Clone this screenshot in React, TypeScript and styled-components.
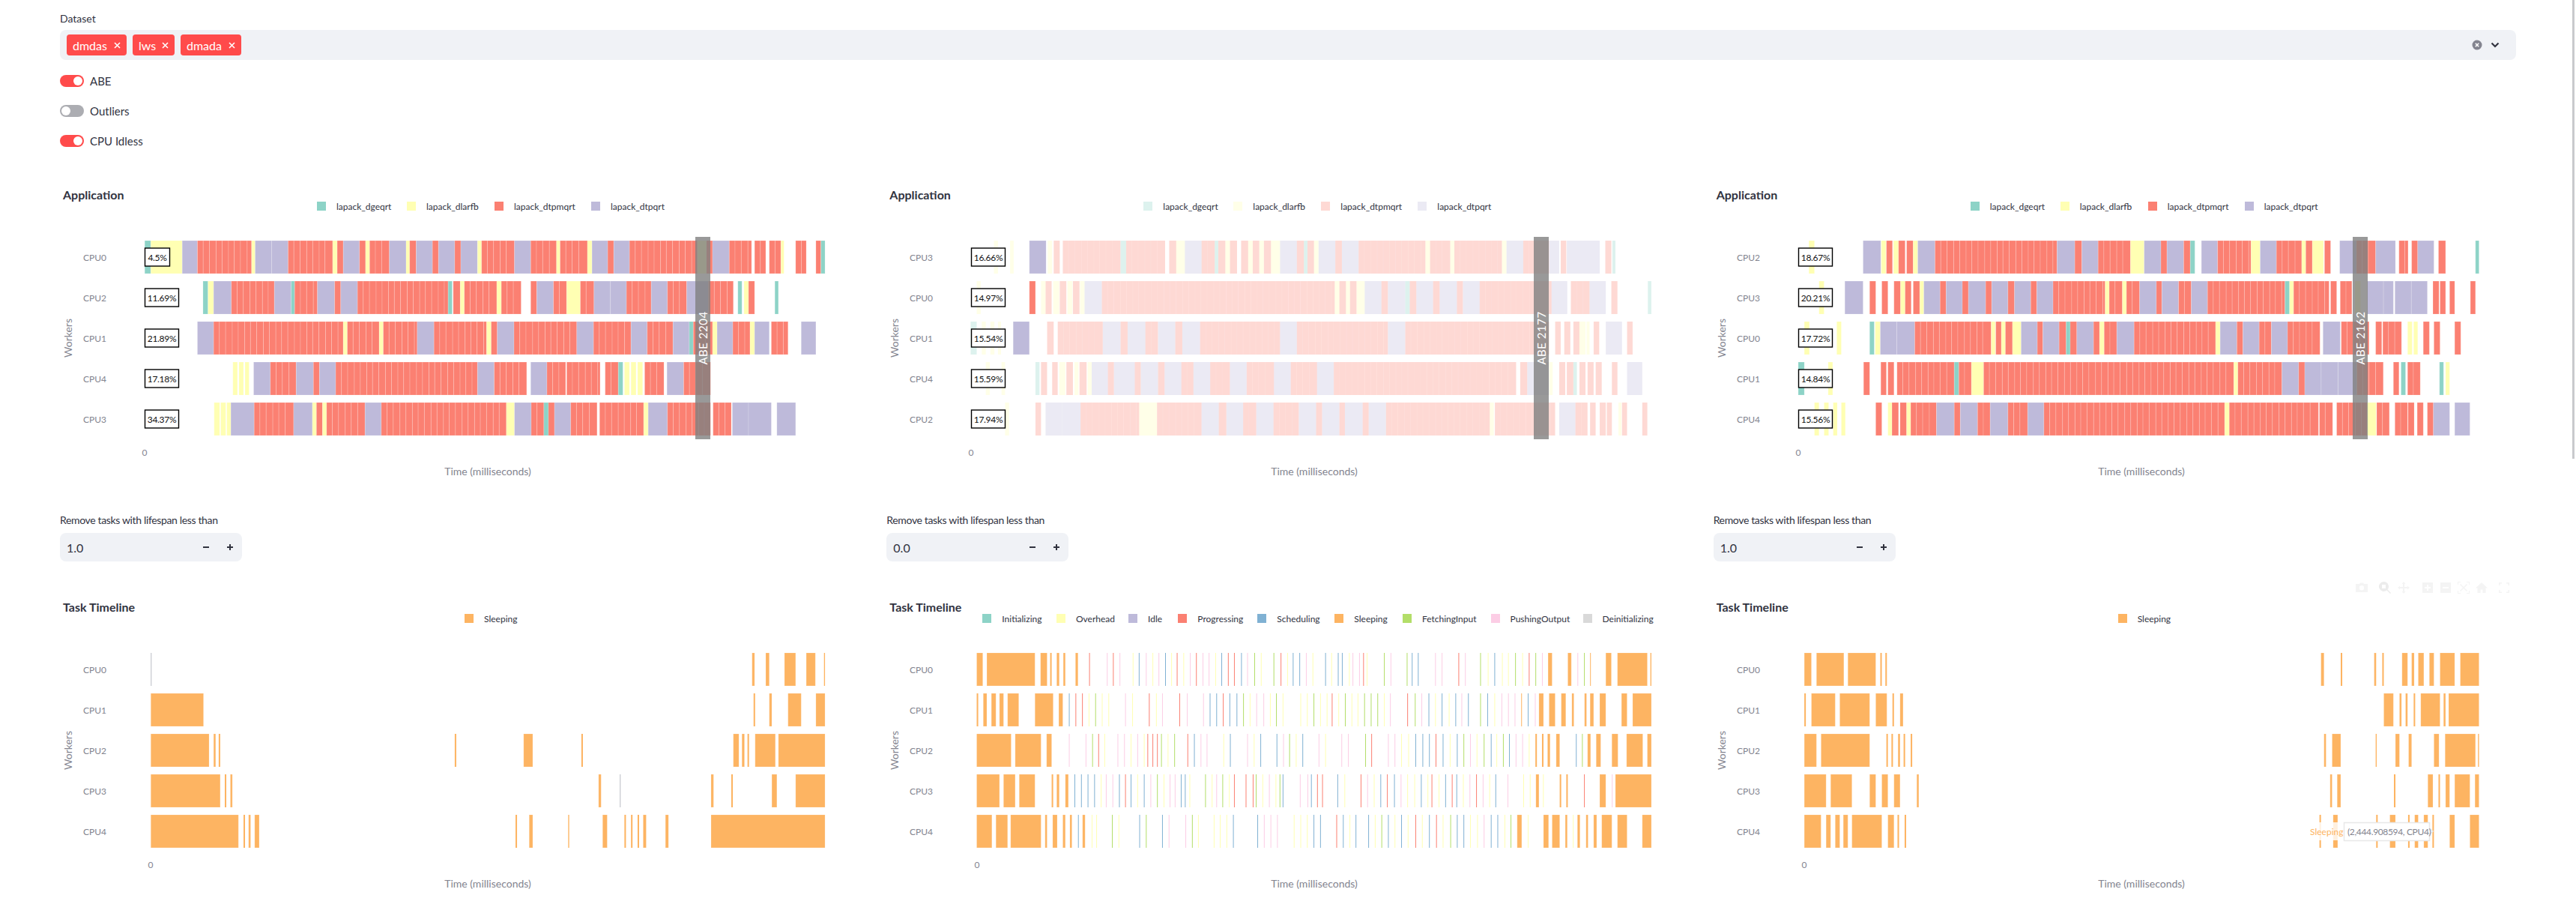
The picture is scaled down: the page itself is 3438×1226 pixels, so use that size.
import { FC } from 'react';
import styled, { createGlobalStyle } from 'styled-components';

const GlobalStyle = createGlobalStyle`
	html, body {
		margin: 0;
		background: #fff;
	}
	body {
		font-family: 'Lato', 'Noto Sans', sans-serif;
		color: #31333f;
	}
`;

const COLORS: Record<string, string> = {
	t: '#8dd3c7',
	y: '#ffffb3',
	l: '#bebada',
	r: '#fb8072',
	b: '#80b1d3',
	o: '#fdb462',
	g: '#b3de69',
	k: '#fccde5',
	d: '#d9d9d9',
	z: '#b9bcc4',
};

// zoom crops were 1060px wide shown at 1568, so the data below is in those units
const SCALE = 1568 / 1060;
const ROW_TOP = 31;
const ROW_PITCH = 54;
const ROW_HEIGHT = 44;

interface ISegment {
	color: string;
	start: number;
	end: number;
	solid: boolean;
}

const parseSegments = (data: string, shift: number): ISegment[] =>
	data
		.trim()
		.split(/\s+/)
		.map((item) => {
			const code = item[0];
			const [from, to] = item.slice(1).split('-').map(Number);
			const start = from / SCALE + shift;
			const end = to ? to / SCALE + shift : start + 1;
			return { color: COLORS[code.toLowerCase()], start, end, solid: code !== code.toLowerCase() };
		});

// long runs are many short tasks side by side
const splitSegment = (segment: ISegment): ISegment[] => {
	const step = segment.color === COLORS.r ? 8.3 : segment.color === COLORS.l ? 22.5 : 0;
	if (!step) return [segment];
	const parts: ISegment[] = [];
	let from = segment.start;
	let i = 0;
	while (segment.end - from > step * 1.4) {
		const next = from + step + ((i * 7) % 5) * 0.3 - 0.6;
		parts.push({ ...segment, start: from, end: next });
		from = next;
		i++;
	}
	parts.push({ ...segment, start: from });
	return parts;
};

const Page = styled.div`
	box-sizing: border-box;
	position: relative;
	width: 3438px;
	height: 1226px;
	overflow: hidden;
	padding: 16px 80px 0;
`;

const Scrollbar = styled.div`
	position: absolute;
	top: 0;
	right: 2px;
	width: 3px;
	height: 612px;
	background: #c9cacd;
`;

const FieldLabel = styled.div<{ $tight?: boolean }>`
	font-size: 14px;
	line-height: 18px;
	height: 18px;
	color: #31333f;
	letter-spacing: ${(p) => (p.$tight ? '-0.35px' : '0')};
`;

const SelectBox = styled.div`
	display: flex;
	align-items: center;
	height: 40px;
	margin-top: 6px;
	padding: 0 20px 0 9px;
	background: #f0f2f6;
	border-radius: 8px;
`;

const Tag = styled.div<{ $width: number }>`
	display: flex;
	align-items: center;
	justify-content: space-between;
	box-sizing: border-box;
	width: ${(p) => p.$width}px;
	height: 28px;
	margin-right: 8px;
	padding: 0 8px;
	border-radius: 4px;
	background: #ff4b4b;
	color: #fff;
	font-size: 16px;
`;

const SelectActions = styled.div`
	display: flex;
	align-items: center;
	gap: 9px;
	margin-left: auto;
`;

const ToggleList = styled.div`
	display: flex;
	flex-direction: column;
	gap: 24px;
	margin-top: 20px;
`;

const ToggleRow = styled.div`
	display: flex;
	align-items: center;
	gap: 8px;
	height: 16px;
	font-size: 15px;
`;

const Track = styled.div<{ $on: boolean }>`
	display: flex;
	justify-content: ${(p) => (p.$on ? 'flex-end' : 'flex-start')};
	align-items: center;
	box-sizing: border-box;
	width: 32px;
	height: 16px;
	padding: 2px;
	border-radius: 8px;
	background: ${(p) => (p.$on ? '#ff4b4b' : '#acadb2')};
`;

const Knob = styled.div`
	width: 12px;
	height: 12px;
	border-radius: 50%;
	background: #fff;
`;

const Columns = styled.div`
	display: grid;
	grid-template-columns: repeat(3, 1fr);
	gap: 32px;
	margin-top: 44px;
`;

const Column = styled.div`
	display: flex;
	flex-direction: column;
	min-width: 0;
`;

const ChartSlot = styled.div`
	position: relative;
`;

const Figure = styled.div`
	height: 410px;
`;

const FigureHead = styled.div`
	display: flex;
	flex-direction: column;
	height: 50px;
	padding-top: 11px;
	box-sizing: border-box;
`;

const FigureTitle = styled.div`
	padding-left: 4px;
	font-size: 16px;
	font-weight: 700;
	line-height: 18px;
	color: #31333f;
`;

const Legend = styled.div<{ $left: number }>`
	display: flex;
	align-items: center;
	height: 16px;
	margin-top: -2px;
	padding-left: ${(p) => p.$left}px;
`;

const LegendItem = styled.div<{ $width: number }>`
	display: flex;
	align-items: center;
	gap: 14px;
	width: ${(p) => p.$width}px;
	flex: none;
	font-size: 12px;
	color: #31333f;
	white-space: nowrap;
`;

const Swatch = styled.span<{ $color: string; $faded?: boolean }>`
	flex: none;
	width: 12px;
	height: 12px;
	background: ${(p) => p.$color};
	opacity: ${(p) => (p.$faded ? 0.3 : 1)};
`;

const PlotSvg = styled.svg`
	display: block;
	overflow: visible;
`;

const TaskRect = styled.rect`
	stroke: #fff;
	stroke-width: 1;
`;

const TickText = styled.text`
	font-family: 'Lato', sans-serif;
	font-size: 12px;
	fill: #83848f;
	dominant-baseline: central;
`;

const AxisText = styled(TickText)`
	font-size: 14px;
`;

const HoverName = styled(TickText)`
	fill: #fdb462;
`;

const HoverValue = styled(TickText)`
	letter-spacing: -0.35px;
`;

const BoxText = styled.text`
	font-family: 'Lato', sans-serif;
	font-size: 12px;
	letter-spacing: -0.3px;
	fill: #111;
	text-anchor: middle;
	dominant-baseline: central;
`;

const AbeText = styled.text`
	font-family: 'Lato', sans-serif;
	font-size: 15px;
	letter-spacing: 0.5px;
	fill: #fff;
	text-anchor: middle;
	dominant-baseline: central;
`;

const NumberField = styled.div`
	margin-top: 35px;
	margin-bottom: 41px;
`;

const Stepper = styled.div`
	display: flex;
	align-items: center;
	box-sizing: border-box;
	width: 243px;
	height: 38px;
	margin-top: 8px;
	padding: 0 12px 0 9px;
	border-radius: 8px;
	background: #f0f2f6;
	font-size: 16px;
`;

const StepButtons = styled.div`
	display: flex;
	align-items: center;
	gap: 24px;
	margin-left: auto;
`;

const ModeBar = styled.div`
	position: absolute;
	top: -14px;
	left: 857px;
	display: flex;
	align-items: center;
`;

const ToolIcon = styled.svg<{ $gap: number; $active?: boolean }>`
	width: 16px;
	height: 16px;
	margin-left: ${(p) => p.$gap}px;
	fill: ${(p) => (p.$active ? '#ececec' : '#f4f4f4')};
`;

const TAB_LEGEND = ['lapack_dgeqrt', 'lapack_dlarfb', 'lapack_dtpmqrt', 'lapack_dtpqrt'];

interface ILegendEntry {
	name: string;
	color: string;
	width: number;
}

const APP_LEGEND: ILegendEntry[] = [
	{ name: TAB_LEGEND[0], color: COLORS.t, width: 120 },
	{ name: TAB_LEGEND[1], color: COLORS.y, width: 117 },
	{ name: TAB_LEGEND[2], color: COLORS.r, width: 129 },
	{ name: TAB_LEGEND[3], color: COLORS.l, width: 100 },
];

const SLEEP_LEGEND: ILegendEntry[] = [{ name: 'Sleeping', color: COLORS.o, width: 80 }];

const STATE_LEGEND: ILegendEntry[] = [
	{ name: 'Initializing', color: COLORS.t, width: 98.7 },
	{ name: 'Overhead', color: COLORS.y, width: 96 },
	{ name: 'Idle', color: COLORS.l, width: 66.3 },
	{ name: 'Progressing', color: COLORS.r, width: 106 },
	{ name: 'Scheduling', color: COLORS.b, width: 103 },
	{ name: 'Sleeping', color: COLORS.o, width: 90.6 },
	{ name: 'FetchingInput', color: COLORS.g, width: 117.6 },
	{ name: 'PushingOutput', color: COLORS.k, width: 123 },
	{ name: 'Deinitializing', color: COLORS.d, width: 92 },
];

interface IRow {
	name: string;
	share?: string;
	data: string;
}

const APP_ONE: IRow[] = [
	{ name: 'CPU0', share: '4.5%', data: 't197-209 y209-271 l271-301 r301-408 y408-415 l415-480 r480-568 y568-577 r577-589 l589-621 r621-633 y633-641 r641-680 l680-713 y713-720 r720-733 l733-765 r765-777 l777-809 r809-821 l821-854 y854-862 r862-927 l927-959 r959-1010 y1010-1017 r1017-1071 y1071-1080 l1080-1111 r1111-1123 l1123-1154 r1154-1288 y1288-1306 r1306-1318 l1318-1351 r1351-1395 r1401-1423 r1430-1453 y1453-1459 r1482-1503 r1522-1532 t1532-1540' },
	{ name: 'CPU2', share: '11.69%', data: 't312-322 y322-333 l333-368 r368-453 l453-486 t486-493 r493-538 l538-572 r572-584 l584-617 r617-796 t796-804 r806-820 y820-828 r828-892 y892-901 r901-940 r959-971 l971-1004 r1004-1030 y1030-1057 r1057-1084 l1084-1148 r1148-1197 l1197-1229 r1229-1267 l1267-1310 r1310-1359 t1368-1376 y1380-1389 r1389-1401 t1441-1448' },
	{ name: 'CPU1', share: '21.89%', data: 'l301-333 r333-589 y589-597 r597-660 y660-668 r668-735 l735-768 r768-872 y872-881 r881-893 l893-926 r926-1050 l1050-1083 r1083-1157 l1157-1189 r1189-1240 l1240-1272 t1272-1280 r1280-1318 y1318-1327 l1327-1358 r1358-1392 y1392-1401 l1401-1430 r1434-1467 l1493-1522' },
	{ name: 'CPU4', share: '17.18%', data: 'y371-380 y383-392 y395-403 l412-445 r445-496 l496-530 r530-542 l542-574 r574-854 l854-887 r887-951 l959-991 r991-1028 r1030-1096 r1106-1132 t1132-1141 y1144-1154 y1157-1167 y1170-1180 r1184-1222 l1228-1261 r1261-1314' },
	{ name: 'CPU3', share: '34.37%', data: 'y334-345 y347-357 y359-367 l367-413 r413-491 l491-528 y528-536 r536-548 y548-556 r556-632 l632-664 r664-911 y911-927 l927-960 r960-985 t985-994 r994-1006 l1006-1038 r1038-1090 r1095-1182 y1182-1191 l1191-1229 r1229-1314 r1319-1355 l1357-1389 l1389-1434 l1445-1482' },
];

const APP_TWO: IRow[] = [
	{ name: 'CPU3', share: '16.66%', data: 'y232-240 y264-271 L302-335 y338-347 r350-362 r368-482 t482-493 r493-570 r578-592 y592-609 l609-642 r642-668 t668-675 r675-689 y689-698 r698-712 r720-734 y734-743 r743-756 y756-765 r765-779 y779-797 l797-830 r830-844 t844-851 r851-864 y864-873 l873-906 r906-919 l919-952 r952-1084 y1084-1093 r1093-1133 y1133-1141 r1141-1235 y1235-1244 l1244-1277 r1277-1328 l1328-1348 r1351-1362 l1363-1428 r1439-1451 t1453-1459' },
	{ name: 'CPU0', share: '14.97%', data: 'y198-206 R302-314 y325-334 r334-346 y349-361 r362-375 y377-387 r388-401 y402-411 l411-445 r445-905 y905-914 r914-927 y927-935 r935-948 y948-964 l964-997 r997-1010 l1010-1044 t1044-1053 r1053-1066 l1066-1099 r1099-1112 l1112-1146 r1146-1158 l1158-1191 r1191-1333 l1333-1364 r1371-1408 l1408-1440 r1451-1463 t1523-1530' },
	{ name: 'CPU1', share: '15.54%', data: 't186-198 y208-216 y225-233 y240-246 L270-302 r337-350 r358-447 l447-482 r482-496 l496-531 r531-556 l556-590 r590-604 l604-639 r639-797 l797-830 r830-1010 l1010-1044 r1044-1328 r1340-1351 r1358-1370 r1376-1388 y1388-1400 y1402-1408 r1416-1427 l1440-1472 r1482-1493' },
	{ name: 'CPU4', share: '15.59%', data: 'y216-224 y247-254 t314-322 r325-337 r347-358 y361-373 r375-388 y391-399 r401-415 y417-425 l425-457 r457-469 l469-510 r510-522 l522-556 r556-569 l569-602 r602-626 l626-659 r659-698 l698-731 r731-785 l785-818 r818-870 l870-903 r903-1263 r1271-1285 l1285-1328 y1328-1335 r1348-1360 r1363-1376 t1376-1383 r1388-1400 r1404-1416 r1420-1432 r1452-1463 l1482-1512' },
	{ name: 'CPU2', share: '17.94%', data: 'y254-262 r314-325 l334-403 r403-519 y519-554 r554-642 l642-676 r676-691 l691-724 r724-750 l750-784 r784-834 l834-868 r868-880 l880-914 r914-925 l925-960 r960-972 l972-1006 r1006-1211 y1211-1219 r1221-1340 l1348-1380 r1380-1404 r1409-1420 r1428-1440 r1442-1452 y1465-1471 r1472-1482 r1512-1522' },
];

const APP_THREE: IRow[] = [
	{ name: 'CPU2', share: '18.67%', data: 'y198-209 l305-340 y341-350 r351-363 y365-375 r375-388 r391-404 y404-413 l413-447 r447-688 l688-723 r723-737 l737-769 r769-833 y833-860 l860-893 r893-905 l905-938 r938-951 t951-960 l973-1005 r1005-1071 y1071-1089 l1089-1121 r1121-1171 y1171-1179 r1179-1192 y1192-1214 r1216-1228 l1246-1279 r1279-1317 l1317-1356 r1363-1381 r1388-1400 l1400-1432 r1441-1455 t1514-1521' },
	{ name: 'CPU3', share: '20.21%', data: 'y218-228 l269-305 r318-330 r342-354 r366-379 y379-388 r388-400 r404-417 y417-425 l425-457 r457-469 l469-501 r501-513 l513-547 r547-559 l559-591 r591-604 l604-636 r636-648 l648-680 r680-783 y783-791 r791-817 y817-825 r825-851 l851-884 r884-895 l895-928 r928-953 l953-985 r985-1138 t1138-1147 y1147-1155 r1155-1225 r1228-1240 r1247-1270 y1276-1287 l1300-1352 l1355-1419 r1430-1442 r1444-1455 r1463-1473 r1504-1514' },
	{ name: 'CPU0', share: '17.72%', data: 'y189-199 y253-262 t318-327 y329-339 l339-407 r407-558 y558-566 r567-578 y578-586 r586-600 y600-617 l617-649 r649-660 l660-692 r692-706 t706-714 r714-727 l727-760 r760-772 y772-781 r781-806 l806-840 r840-1001 y1001-1010 l1010-1043 r1043-1055 l1055-1087 r1087-1111 l1111-1143 r1143-1207 l1213-1247 r1249-1304 r1317-1329 r1331-1368 y1380-1389 y1392-1400 r1411-1423 r1432-1444 r1473-1485' },
	{ name: 'CPU1', share: '14.84%', data: 't177-189 y236-245 r306-318 r340-351 r354-366 r372-485 t485-494 r494-519 y519-543 r543-1037 y1037-1045 r1045-1132 l1132-1165 r1165-1177 l1177-1280 r1280-1332 r1352-1363 t1367-1376 r1380-1405 t1443-1451 y1455-1463' },
	{ name: 'CPU4', share: '15.56%', data: 'y209-218 y228-237 y246-254 y262-270 r330-342 y354-362 r362-375 r378-391 y391-399 r399-450 l450-485 r485-497 l497-531 r531-556 l556-591 r591-630 l630-662 r662-1019 y1019-1028 r1028-1204 r1206-1232 r1240-1300 y1300-1318 r1319-1344 r1355-1380 r1381-1393 r1399-1411 r1419-1431 l1431-1463 l1473-1503' },
];

const TIME_ONE: IRow[] = [
	{ name: 'CPU0', data: 'z209 o1396-1401 o1423-1430 o1460-1482 o1503-1521 o1538-1540' },
	{ name: 'CPU1', data: 'o209-313 o1399-1402 o1430-1435 o1467-1493 o1522-1540' },
	{ name: 'CPU2', data: 'o209-324 o333-337 o343-346 o809-812 o945-963 o1059-1062 o1359-1370 o1376-1381 o1387-1390 o1402-1442 o1448-1540' },
	{ name: 'CPU3', data: 'o209-346 o355-358 o366-370 o1093-1098 z1135 o1315-1320 o1355-1358 o1435-1445 o1482-1540' },
	{ name: 'CPU4', data: 'o209-382 o392-395 o402-406 o414-423 o929-932 o956-963 o1033-1035 o1101-1110 o1144-1147 o1157-1160 o1170-1173 o1181-1187 o1225-1231 o1315-1540' },
];

const TIME_TWO: IRow[] = [
	{ name: 'CPU0', data: 'o198-210 o218-313 o324-337 o343-346 o356-361 o369-373 o393-398 o1326-1334 o1365-1372 o1440-1451 o1463-1522 o1528-1530 r420 k455 r467 k480 y506 b518 k532 y545 k557 b570 y582 r593 y606 k619 r631 k644 k656 y669 b681 r694 r706 b720 k732 g746 y759 g784 r798 y811 b822 b835 k848 y861 b886 y898 b911 b919 y933 k940 k953 r961 y968 g1002 k1015 g1047 b1057 b1069 k1103 k1116 r1149 k1162 g1192 y1207 b1220 y1235 y1247 g1261 y1275 r1288 g1301 k1314 k1384 g1397 o1409' },
	{ name: 'CPU1', data: 'o198-201 o211-218 o227-236 o243-251 o259-281 o313-349 o360-368 o1308-1317 o1328-1340 o1352-1361 o1373-1377 o1398-1402 o1409-1416 o1428-1440 o1471-1482 o1493-1530 b380 r393 r406 y419 g432 y445 y458 k491 y505 r538 y552 k564 r598 k613 k645 b658 b671 r684 b697 b711 g724 y737 k750 k764 y777 g789 y802 y837 y850 g863 y876 y889 r899 y912 g925 y938 y950 g963 g976 g989 y1002 k1014 r1048 g1063 k1076 b1090 y1103 b1116 y1130 b1143 k1155 b1168 g1192 b1206 y1220 k1234 k1247 k1260 o1273 b1286 k1300' },
	{ name: 'CPU2', data: 'o198-266 o274-325 o336-346 o1301-1304 o1314-1317 o1325-1330 o1342-1349 o1404-1410 o1421-1430 o1452-1464 o1481-1513 o1522-1530 k380 k413 g426 r438 y450 k476 k489 y502 k515 y528 r535 r545 r554 g562 y575 g588 r614 b627 k640 k652 y685 b698 k732 y745 b758 b790 k803 g815 y828 b841 k873 y886 k918 k931 g965 r977 k1010 k1023 y1036 y1050 b1064 b1078 b1091 r1104 b1118 y1132 b1146 g1159 k1172 y1185 g1199 b1213 y1224 g1237 b1249 k1262 k1275 y1288 b1381 g1393' },
	{ name: 'CPU3', data: 'o198-243 o251-274 o282-313 o346-349 o356-361 o373-379 o1302-1308 o1349-1352 o1362-1365 o1428-1440 o1459-1530 b391 b404 b417 b430 y443 k453 k466 b479 r491 b502 y515 b528 k541 g554 y567 k579 k589 b601 b609 y618 g649 y662 k671 g683 y696 r706 r729 r743 g749 y762 k775 y788 g796 b802 k836 k851 b858 r870 r880 b910 y924 r956 k969 y982 b995 r1008 b1022 k1035 y1048 y1062 b1075 y1088 r1096 y1110 b1123 r1136 b1145 y1158 k1171 r1184 k1197 y1210 b1222 k1246 y1277 y1290 y1316 r1397 k1452' },
	{ name: 'CPU4', data: 'o198-228 o236-259 o265-325 o333-337 o348-357 o368-373 o382-386 o407-412 o1265-1274 o1317-1327 o1334-1349 o1360-1364 o1384-1389 o1401-1405 o1416-1422 o1432-1452 o1463-1482 o1512-1530 b398 y425 y434 g465 y478 b519 g532 b564 k577 k610 g623 y635 y666 y678 y691 b704 b752 k765 k778 k791 y824 y837 y850 b863 b876 r908 b921 y934 b946 b971 y984 g997 b1010 y1023 b1036 y1049 r1064 y1077 b1091 r1105 y1118 g1133 b1146 b1159 y1172 y1186 k1199 b1213 b1226 y1240 g1252 y1286 y1375' },
];

const TIME_THREE: IRow[] = [
	{ name: 'CPU0', data: 'o189-203 o213-267 o275-330 o339-342 o349-352 o1209-1215 o1248-1251 o1314-1318 o1330-1333 o1369-1380 o1388-1393 o1401-1412 o1423-1432 o1444-1473 o1484-1521' },
	{ name: 'CPU1', data: 'o189-192 o203-250 o259-318 o330-352 o363-366 o378-384 o1333-1352 o1364-1368 o1376-1380 o1392-1395 o1406-1444 o1451-1455 o1461-1521' },
	{ name: 'CPU2', data: 'o189-213 o222-318 o351-354 o361-364 o374-378 o385-388 o399-402 o1215-1219 o1231-1248 o1317-1319 o1356-1364 o1382-1388 o1432-1442 o1454-1514 o1519-1521' },
	{ name: 'CPU3', data: 'o189-232 o241-283 o318-330 o342-354 o366-378 o411-415 o1227-1231 o1241-1248 o1353-1356 o1420-1430 o1441-1444 o1455-1463 o1473-1503 o1513-1521' },
	{ name: 'CPU4', data: 'o189-222 o232-241 o250-259 o266-275 o283-342 o354-366 o373-376 o387-390 o1206-1209 o1233-1242 o1318-1321 o1345-1356 o1381-1384 o1394-1401 o1412-1420 o1429-1432 o1463-1473 o1503-1521' },
];

interface IPlotProps {
	rows: IRow[];
	shift: number;
	zeroX: number;
	abe?: { x: number; label: string };
	faded?: boolean;
	hover?: boolean;
}

// thin tasks would vanish under the light outline, faded ones only need a trace of it
const outlineOpacity = (width: number, faded: boolean) => {
	if (width < 2.5) return 0;
	return faded ? 0.08 : 0.18;
};

const Plot: FC<IPlotProps> = ({ rows, shift, zeroX, abe, faded, hover }) => (
	<PlotSvg width={1071} height={360} viewBox="0 0 1071 360">
		{rows.map((row, index) => {
			const y = ROW_TOP + index * ROW_PITCH;
			const center = y + ROW_HEIGHT / 2;
			const segments = parseSegments(row.data, shift);
			return (
				<g key={row.name}>
					{segments.flatMap(splitSegment).map((segment, i) => (
						<TaskRect
							key={i}
							x={segment.start}
							y={y}
							width={segment.end - segment.start}
							height={ROW_HEIGHT}
							fill={segment.color}
							fillOpacity={faded && !segment.solid ? 0.3 : 1}
							strokeOpacity={outlineOpacity(segment.end - segment.start, !!faded && !segment.solid)}
						/>
					))}
					<TickText x={62} y={center} textAnchor="end">
						{row.name}
					</TickText>
				</g>
			);
		})}
		{rows.map((row, index) => {
			if (!row.share) return null;
			const center = ROW_TOP + index * ROW_PITCH + ROW_HEIGHT / 2;
			const width = row.share.length < 5 ? 33 : 45;
			return (
				<g key={row.name}>
					<rect x={zeroX + 0.5} y={center - 12} width={width} height={24} fill="#fff" stroke="#000" strokeWidth={1.4} />
					<BoxText x={zeroX + 0.5 + width / 2} y={center}>
						{row.share}
					</BoxText>
				</g>
			);
		})}
		{abe && (
			<g>
				<rect x={abe.x} y={26} width={20} height={270} fill="#808080" fillOpacity={0.8} />
				<AbeText transform={`translate(${abe.x + 10} 161) rotate(-90)`}>{abe.label}</AbeText>
			</g>
		)}
		<TickText x={zeroX} y={313} textAnchor="middle">
			0
		</TickText>
		<AxisText x={571} y={338} textAnchor="middle">
			Time (milliseconds)
		</AxisText>
		<AxisText transform="translate(10 161) rotate(-90)" textAnchor="middle">
			Workers
		</AxisText>
		{hover && (
			<g>
				<rect x={795} y={257} width={46} height={24} fill="#fff" fillOpacity={0.8} />
				<path d="M841.5 257.5 H955.5 V265 L960 269 L955.5 273 V281.5 H841.5 Z" fill="#fff" stroke="#e8e8e8" strokeWidth={1.5} />
				<HoverName x={796} y={269}>
					Sleeping
				</HoverName>
				<HoverValue x={846} y={269}>
					(2,444.908594, CPU4)
				</HoverValue>
			</g>
		)}
	</PlotSvg>
);

interface IChartProps extends IPlotProps {
	title: string;
	legend: ILegendEntry[];
	legendLeft: number;
	legendFaded?: boolean;
}

const Chart: FC<IChartProps> = ({ title, legend, legendLeft, legendFaded, ...plot }) => (
	<Figure>
		<FigureHead>
			<FigureTitle>{title}</FigureTitle>
			<Legend $left={legendLeft}>
				{legend.map((entry) => (
					<LegendItem key={entry.name} $width={entry.width}>
						<Swatch $color={entry.color} $faded={legendFaded} />
						{entry.name}
					</LegendItem>
				))}
			</Legend>
		</FigureHead>
		<Plot {...plot} />
	</Figure>
);

const LifespanField: FC<{ value: string }> = ({ value }) => (
	<NumberField>
		<FieldLabel $tight>Remove tasks with lifespan less than</FieldLabel>
		<Stepper>
			{value}
			<StepButtons>
				<svg width="8" height="8" viewBox="0 0 8 8">
					<path d="M0 4H8" stroke="#31333f" strokeWidth="2" />
				</svg>
				<svg width="8" height="8" viewBox="0 0 8 8">
					<path d="M0 4H8M4 0V8" stroke="#31333f" strokeWidth="2" />
				</svg>
			</StepButtons>
		</Stepper>
	</NumberField>
);

const ModeBarIcons: FC = () => (
	<ModeBar>
		<ToolIcon $gap={0} viewBox="0 0 16 16">
			<path d="M5 3 6 1.5H10L11 3H16V14H0V3ZM8 5A3.2 3.2 0 1 0 8 11.4 3.2 3.2 0 1 0 8 5Z" />
		</ToolIcon>
		<ToolIcon $gap={15} $active viewBox="0 0 16 16">
			<path fillRule="evenodd" d="M6.5 0A6.5 6.5 0 0 1 11.6 10.5L16 15 15 16 10.5 11.6A6.5 6.5 0 1 1 6.5 0ZM4 4V9H9V4Z" />
		</ToolIcon>
		<ToolIcon $gap={9} viewBox="0 0 16 16">
			<path d="M8 0 10.5 3H9V7H13V5.500L16 8 13 10.500V9H9V13H10.500L8 16 5.500 13H7V9H3V10.500L0 8 3 5.500V7H7V3H5.500Z" />
		</ToolIcon>
		<ToolIcon $gap={16} viewBox="0 0 16 16">
			<path fillRule="evenodd" d="M1 1H15V15H1ZM7 4V7H4V9H7V12H9V9H12V7H9V4Z" />
		</ToolIcon>
		<ToolIcon $gap={8} viewBox="0 0 16 16">
			<path fillRule="evenodd" d="M1 1H15V15H1ZM4 7V9H12V7Z" />
		</ToolIcon>
		<ToolIcon $gap={8} viewBox="0 0 16 16">
			<path d="M0 0H4V1H1V4H0ZM12 0H16V4H15V1H12ZM0 12H1V15H4V16H0ZM15 12H16V16H12V15H15ZM3 4 4 3 8 7 12 3 13 4 9 8 13 12 12 13 8 9 4 13 3 12 7 8Z" />
		</ToolIcon>
		<ToolIcon $gap={8} viewBox="0 0 16 16">
			<path d="M8 1 16 8.500H13.500V15H9.500V10.500H6.500V15H2.500V8.500H0Z" />
		</ToolIcon>
		<ToolIcon $gap={14} viewBox="0 0 16 16">
			<path d="M1 1H5V2.500H2.500V5H1ZM11 1H15V5H13.500V2.500H11ZM1 11H2.500V13.500H5V15H1ZM13.500 11H15V15H11V13.500H13.500Z" />
		</ToolIcon>
	</ModeBar>
);

const TAGS = [
	{ name: 'dmdas', width: 80 },
	{ name: 'lws', width: 56 },
	{ name: 'dmada', width: 81 },
];

const TOGGLES = [
	{ name: 'ABE', on: true },
	{ name: 'Outliers', on: false },
	{ name: 'CPU Idless', on: true },
];

const App: FC = () => (
	<Page>
		<GlobalStyle />
		<Scrollbar />
		<FieldLabel>Dataset</FieldLabel>
		<SelectBox>
			{TAGS.map((tag) => (
				<Tag key={tag.name} $width={tag.width}>
					{tag.name}
					<svg width="9" height="9" viewBox="0 0 9 9">
						<path d="M1 1 8 8M8 1 1 8" stroke="#fff" strokeWidth="1.6" />
					</svg>
				</Tag>
			))}
			<SelectActions>
				<svg width="14" height="14" viewBox="0 0 14 14">
					<circle cx="7" cy="7" r="6.5" fill="#83848f" />
					<path d="M4.800 4.800 9.200 9.200M9.200 4.800 4.800 9.200" stroke="#fff" strokeWidth="1.500" />
				</svg>
				<svg width="16" height="16" viewBox="0 0 16 16">
					<path d="M3.500 5.500 8 10 12.500 5.500" fill="none" stroke="#31333f" strokeWidth="2.200" />
				</svg>
			</SelectActions>
		</SelectBox>
		<ToggleList>
			{TOGGLES.map((toggle) => (
				<ToggleRow key={toggle.name}>
					<Track $on={toggle.on}>
						<Knob />
					</Track>
					{toggle.name}
				</ToggleRow>
			))}
		</ToggleList>
		<Columns>
			<Column>
				<Chart title="Application" legend={APP_LEGEND} legendLeft={343} rows={APP_ONE} shift={-20} zeroX={113} abe={{ x: 848, label: 'ABE 2204' }} />
				<LifespanField value="1.0" />
				<Chart title="Task Timeline" legend={SLEEP_LEGEND} legendLeft={540} rows={TIME_ONE} shift={-20} zeroX={121} />
			</Column>
			<Column>
				<Chart title="Application" legend={APP_LEGEND} legendLeft={343} legendFaded faded rows={APP_TWO} shift={-13.33} zeroX={113} abe={{ x: 864, label: 'ABE 2177' }} />
				<LifespanField value="0.0" />
				<Chart title="Task Timeline" legend={STATE_LEGEND} legendLeft={128} rows={TIME_TWO} shift={-13.33} zeroX={121} />
			</Column>
			<Column>
				<Chart title="Application" legend={APP_LEGEND} legendLeft={343} rows={APP_THREE} shift={-6.67} zeroX={113} abe={{ x: 853, label: 'ABE 2162' }} />
				<LifespanField value="1.0" />
				<ChartSlot>
					<ModeBarIcons />
					<Chart title="Task Timeline" legend={SLEEP_LEGEND} legendLeft={540} rows={TIME_THREE} shift={-6.67} zeroX={121} hover />
				</ChartSlot>
			</Column>
		</Columns>
	</Page>
);

export default App;
